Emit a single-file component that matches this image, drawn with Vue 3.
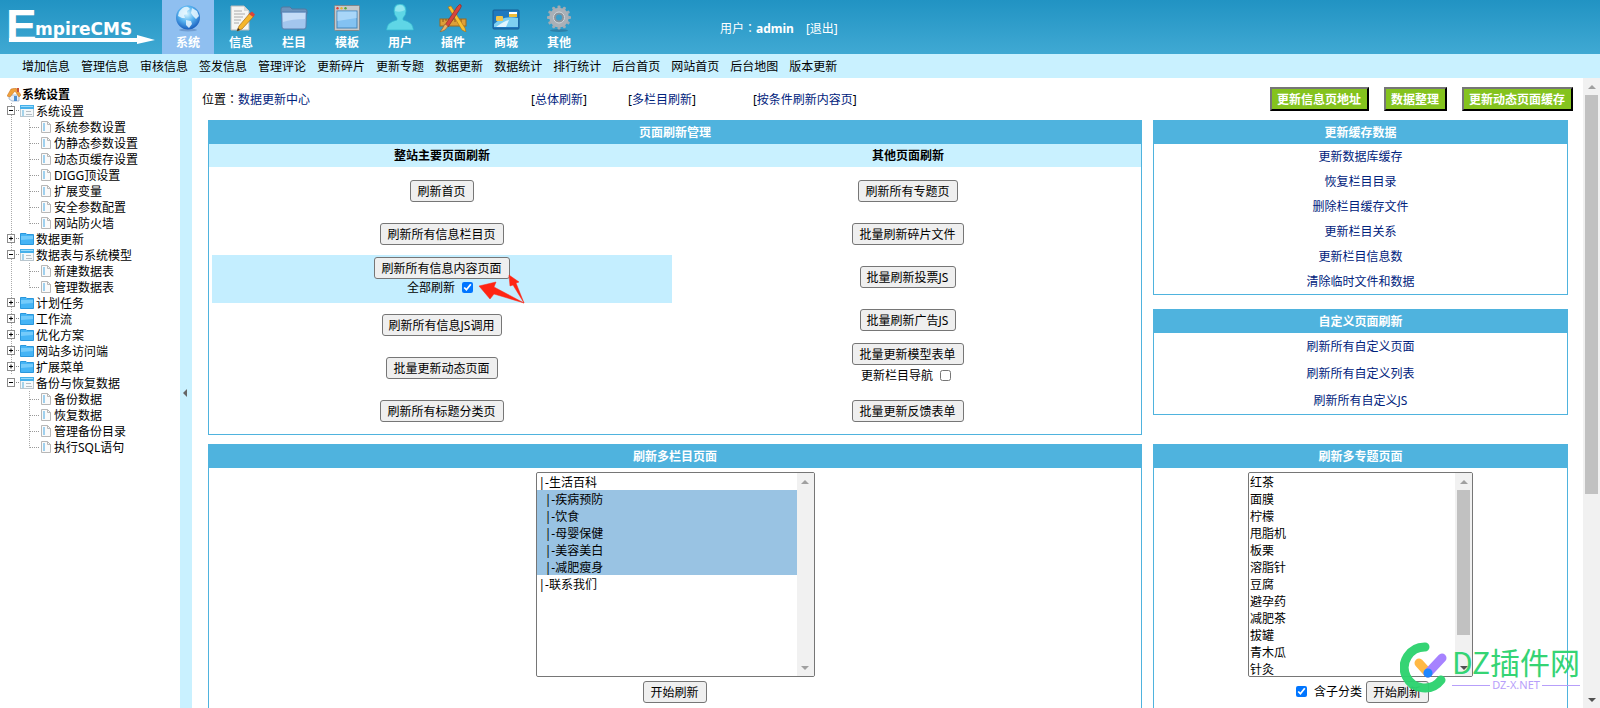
<script setup>
import { ref } from 'vue'

const tabs = ['系统', '信息', '栏目', '模板', '用户', '插件', '商城', '其他']
const icons = ['globe', 'note', 'folder', 'window', 'user', 'tools', 'card', 'gear']

const quickLinks = [
  '增加信息', '管理信息', '审核信息', '签发信息', '管理评论', '更新碎片', '更新专题',
  '数据更新', '数据统计', '排行统计', '后台首页', '网站首页', '后台地图', '版本更新'
]

const tree = [
  { name: '系统设置', children: ['系统参数设置', '伪静态参数设置', '动态页缓存设置', 'DIGG顶设置', '扩展变量', '安全参数配置', '网站防火墙'] },
  { name: '数据更新' },
  { name: '数据表与系统模型', children: ['新建数据表', '管理数据表'] },
  { name: '计划任务' },
  { name: '工作流' },
  { name: '优化方案' },
  { name: '网站多访问端' },
  { name: '扩展菜单' },
  { name: '备份与恢复数据', children: ['备份数据', '恢复数据', '管理备份目录', '执行SQL语句'] }
]

const cacheLinks = ['更新数据库缓存', '恢复栏目目录', '删除栏目缓存文件', '更新栏目关系', '更新栏目信息数', '清除临时文件和数据']
const customLinks = ['刷新所有自定义页面', '刷新所有自定义列表', '刷新所有自定义JS']

const columns = [
  { id: 1, label: '|-生活百科' },
  { id: 2, label: '\u00a0\u00a0|-疾病预防' },
  { id: 3, label: '\u00a0\u00a0|-饮食' },
  { id: 4, label: '\u00a0\u00a0|-母婴保健' },
  { id: 5, label: '\u00a0\u00a0|-美容美白' },
  { id: 6, label: '\u00a0\u00a0|-减肥瘦身' },
  { id: 7, label: '|-联系我们' }
]
const topics = ['红茶', '面膜', '柠檬', '甩脂机', '板栗', '溶脂针', '豆腐', '避孕药', '减肥茶', '拔罐', '青木瓜', '针灸']

const pickedColumns = ref([2, 3, 4, 5, 6])
const pickedTopics = ref([])
const refreshAll = ref(true)
const updateNav = ref(false)
const withChildren = ref(true)
const teeth = [0, 30, 60, 90, 120, 150, 180, 210, 240, 270, 300, 330]
</script>

<template>
  <div class="page">
    <header class="top">
      <svg class="logo" viewBox="0 0 162 54" role="img" aria-label="EmpireCMS">
        <text x="6" y="42" class="logo-initial">E</text>
        <text x="35" y="35" class="logo-rest">mpireCMS</text>
        <path d="M9 38H137V35L155 40L137 44V42H9Z" fill="#fff" />
      </svg>
      <nav class="tabs">
        <a v-for="(t, i) in tabs" :key="t" href="#" class="tab" :class="{ active: i === 0 }">
          <svg viewBox="0 0 28 28" class="tab-icon" aria-hidden="true">
            <g v-if="icons[i] === 'globe'">
              <defs>
                <radialGradient id="gl" cx=".45" cy=".35" r=".65">
                  <stop offset="0" stop-color="#d9f5ff" /><stop offset=".5" stop-color="#58b4f0" /><stop offset="1" stop-color="#1a5fbe" />
                </radialGradient>
              </defs>
              <ellipse cx="14" cy="26" rx="9" ry="1.5" fill="#5a86bd" opacity=".6" />
              <circle cx="14" cy="13.500" r="12" fill="url(#gl)" />
              <path d="M5 8Q9 2 14 3L16 5L13 7L13 10L10 11L11 14L8 14L4 12ZM18 4L23 7L25 12L22 15L19 12L17 9ZM12 16L17 17L18 20L15 24L12 21Z" fill="#eaf8ff" opacity=".85" />
            </g>
            <g v-else-if="icons[i] === 'note'">
              <path d="M4 2H17L22 7V26H4Z" fill="#f5f5f3" stroke="#b9b9b9" />
              <path d="M17 2V7H22Z" fill="#d8d8d6" />
              <path d="M7 7H15M7 10H18M7 13H16M7 16H14M7 19H12" stroke="#aaa" />
              <path d="M23 9L27 12L15 25L10 27L12 22Z" fill="#f6b62c" stroke="#a86b12" stroke-width=".7" />
              <path d="M22 10L25 7.500L28 10.500L26 13Z" fill="#d9443a" />
              <path d="M10 27L11 24L13 26Z" fill="#333" />
            </g>
            <g v-else-if="icons[i] === 'folder'">
              <path d="M1 5Q1 3 3 3H10L12 5H25Q27 5 27 7V10H1Z" fill="#6d94bd" stroke="#53789f" />
              <path d="M1.500 8H26.500L26 23Q26 25 24 25H4Q2 25 2 23Z" fill="#a3c6ee" stroke="#567fae" />
              <path d="M3 9H25V15Q12 15 3 18Z" fill="#c4dcf7" />
            </g>
            <g v-else-if="icons[i] === 'window'">
              <rect x="1.500" y="1.500" width="25" height="25" rx="1" fill="#c6c9cb" stroke="#83888c" />
              <rect x="4" y="7" width="20" height="17" fill="#83c2f2" stroke="#4387bd" />
              <path d="M4.500 7.500H23.500V14L4.500 17Z" fill="#a9d6f8" />
              <circle cx="4.500" cy="4.200" r="1.200" fill="#e53d32" /><circle cx="8.500" cy="4.200" r="1.200" fill="#e5b332" /><circle cx="12.500" cy="4.200" r="1.200" fill="#52a83a" />
            </g>
            <g v-else-if="icons[i] === 'user'">
              <path d="M14 0Q20 0 20 7Q20 11 17 14V16Q27 18 27.500 26H.5Q1 18 11 16V14Q8 11 8 7Q8 0 14 0Z" fill="#5fd6e6" stroke="#33b9d0" stroke-width=".7" />
              <path d="M14 1Q18 1 19 6Q14 9 9 7Q9 1 14 1Z" fill="#8fe6ef" />
            </g>
            <g v-else-if="icons[i] === 'tools'">
              <rect x="1" y="15" width="26" height="7" fill="#dd9f39" stroke="#9e681b" />
              <path d="M4 15V18M7 15V17M10 15V18M13 15V17M16 15V18M19 15V17M22 15V18" stroke="#87581a" />
              <path d="M9 3L12 2L26 24L27 28L23 26Z" fill="#f8c131" stroke="#a66d17" stroke-width=".6" />
              <path d="M18 3Q21-1 22 1Q23 2 21 5L9 23L6 21Z" fill="#d6453d" stroke="#87231f" stroke-width=".6" />
              <path d="M6 20L9 22Q7 27 1 28Q4 24 6 20Z" fill="#e8b36a" stroke="#8b5a26" stroke-width=".6" />
            </g>
            <g v-else-if="icons[i] === 'card'">
              <rect x="1" y="6" width="26" height="19" rx="1" fill="#1f79bf" stroke="#165c95" />
              <path d="M2 20Q11 11 26 14V23H2Z" fill="#7ed0f2" /><path d="M4 23Q12 17 17 16L14 23Z" fill="#e2f6ff" />
              <rect x="4" y="12" width="7" height="5" rx="1" fill="#f1c54c" />
              <path d="M17 8H25V10H17Z" fill="#fff" /><path d="M17 10H25V13H17Z" fill="#f0bd39" />
            </g>
            <g v-else>
              <ellipse cx="14" cy="26.500" rx="9" ry="1.500" fill="#2b6d91" opacity=".6" />
              <rect v-for="a in teeth" :key="a" x="12.500" y="1.500" width="3" height="6" rx="1" fill="#a3abb2" :transform="`rotate(${a} 14 13.500)`" />
              <circle cx="14" cy="13.500" r="7.500" fill="none" stroke="#a9b0b7" stroke-width="4.500" />
              <circle cx="14" cy="13.500" r="5.500" fill="#8b949c" stroke="#d3d7db" />
              <circle cx="14" cy="13.500" r="3" fill="#3b9fcb" />
            </g>
          </svg>
          <span>{{ t }}</span>
        </a>
      </nav>
      <p class="who">用户<span class="colon">：</span><b>admin</b><a href="#" class="exit">[退出]</a></p>
    </header>

    <nav class="quick">
      <a v-for="q in quickLinks" :key="q" href="#">{{ q }}</a>
    </nav>

    <div class="body">
      <aside class="side">
        <div class="side-title">
          <svg viewBox="0 0 14 14" class="home" aria-hidden="true">
            <path d="M2 7H12V13H5L2 11Z" fill="#e9eef5" stroke="#8da7c4" stroke-width=".7" />
            <path d="M0 8L4 1L9 0L14 7L12 9L8 3L3 9Z" fill="#f0a13a" stroke="#c46e20" stroke-width=".5" />
            <rect x="10" y="0" width="2" height="4" fill="#c8523c" /><rect x="7" y="8" width="3" height="5" fill="#4f8fd0" />
          </svg>
          <b>系统设置</b>
        </div>
        <ul class="tree">
          <li v-for="n in tree" :key="n.name" class="branch">
            <div class="row">
              <svg viewBox="0 0 13 16" class="toggle" aria-hidden="true">
                <rect x=".5" y="3.500" width="7" height="8" fill="#fff" stroke="#8c8c8c" />
                <path d="M2 7.500H6" stroke="#000" /><path v-if="!n.children" d="M4 5.500V9.500" stroke="#000" />
                <path d="M9 7.500H13" stroke="#888" stroke-dasharray="1 1" />
              </svg>
              <svg v-if="n.children" viewBox="0 0 14 14" class="icon" aria-hidden="true">
                <rect x=".5" y="1.500" width="13" height="11" fill="#f4f8fa" stroke="#b9c6ce" />
                <rect x="0" y="1" width="14" height="4" fill="#45b0ea" /><path d="M1 2.500H13" stroke="#9adbfb" />
                <path d="M3 6V12" stroke="#a5d3ea" stroke-width="2" /><path d="M6 7.500H11M6 10.500H12" stroke="#b5bec4" />
              </svg>
              <svg v-else viewBox="0 0 14 14" class="icon" aria-hidden="true">
                <path d="M.5 1.500H6L7 2.500H13.500V12.500H.5Z" fill="#45b4f5" stroke="#2a97dc" /><path d="M1 4H13V7L1 8Z" fill="#74cbfb" />
              </svg>
              <a href="#">{{ n.name }}</a>
            </div>
            <ul v-if="n.children" class="leaves">
              <li v-for="c in n.children" :key="c" class="leaf">
                <svg viewBox="0 0 12 14" class="file" aria-hidden="true">
                  <path d="M1.500 1.500H7.500L10.500 4.500V12.500H1.500Z" fill="#fafafa" stroke="#b7b7b7" />
                  <path d="M7.500 1.500V4.500H10.500" fill="none" stroke="#b7b7b7" /><path d="M4 3V11" stroke="#9fd0ee" stroke-width="2" />
                </svg>
                <a href="#">{{ c }}</a>
              </li>
            </ul>
          </li>
        </ul>
      </aside>

      <button class="divider" type="button" aria-label="收起">
        <svg viewBox="0 0 4 8" class="chevron" aria-hidden="true"><path d="M4 0V8L0 4Z" fill="#666" /></svg>
      </button>

      <main class="main">
        <div class="crumbs">
          <div class="where">位置<span class="colon">：</span><a href="#">数据更新中心</a></div>
          <div class="jump">
            <span>[<a href="#">总体刷新</a>]</span>
            <span>[<a href="#">多栏目刷新</a>]</span>
            <span class="far">[<a href="#">按条件刷新内容页</a>]</span>
          </div>
          <div class="actions">
            <button type="button">更新信息页地址</button>
            <button type="button">数据整理</button>
            <button type="button">更新动态页面缓存</button>
          </div>
        </div>

        <div class="grid">
          <section class="panel">
            <h2>页面刷新管理</h2>
            <div class="halves heads"><h3>整站主要页面刷新</h3><h3>其他页面刷新</h3></div>
            <div class="halves">
              <div class="stack">
                <div class="cell"><button class="btn" type="button">刷新首页</button></div>
                <div class="cell"><button class="btn" type="button">刷新所有信息栏目页</button></div>
                <div class="cell tall hot">
                  <button class="btn" type="button">刷新所有信息内容页面</button>
                  <label class="check">全部刷新<input v-model="refreshAll" type="checkbox"></label>
                  <svg class="pointer" viewBox="0 0 48 30" aria-hidden="true">
                    <path d="M1 12L18 8L16 13L46 29L16 20L12 25ZM31 1L41 8L38 9L46 29L35 11L32 12Z" fill="#ff2513" stroke="#ff2513" stroke-width=".5" />
                  </svg>
                </div>
                <div class="cell"><button class="btn" type="button">刷新所有信息JS调用</button></div>
                <div class="cell"><button class="btn" type="button">批量更新动态页面</button></div>
                <div class="cell"><button class="btn" type="button">刷新所有标题分类页</button></div>
              </div>
              <div class="stack">
                <div class="cell"><button class="btn" type="button">刷新所有专题页</button></div>
                <div class="cell"><button class="btn" type="button">批量刷新碎片文件</button></div>
                <div class="cell"><button class="btn" type="button">批量刷新投票JS</button></div>
                <div class="cell"><button class="btn" type="button">批量刷新广告JS</button></div>
                <div class="cell tall">
                  <button class="btn" type="button">批量更新模型表单</button>
                  <label class="check loose">更新栏目导航<input v-model="updateNav" type="checkbox"></label>
                </div>
                <div class="cell"><button class="btn" type="button">批量更新反馈表单</button></div>
              </div>
            </div>
          </section>

          <div class="aside-panels">
            <section class="panel">
              <h2>更新缓存数据</h2>
              <a v-for="l in cacheLinks" :key="l" href="#" class="line">{{ l }}</a>
            </section>
            <section class="panel roomy">
              <h2>自定义页面刷新</h2>
              <a v-for="l in customLinks" :key="l" href="#" class="line">{{ l }}</a>
            </section>
          </div>

          <section class="panel">
            <h2>刷新多栏目页面</h2>
            <div class="picker">
              <div class="listbox wide">
                <select v-model="pickedColumns" multiple size="12" aria-label="刷新多栏目页面">
                  <option v-for="c in columns" :key="c.id" :value="c.id">{{ c.label }}</option>
                </select>
                <div class="bar"><i class="up"></i><i class="down"></i></div>
              </div>
              <div class="submit"><button class="btn" type="button">开始刷新</button></div>
            </div>
          </section>

          <section class="panel">
            <h2>刷新多专题页面</h2>
            <div class="picker">
              <div class="listbox">
                <select v-model="pickedTopics" multiple size="12" aria-label="刷新多专题页面">
                  <option v-for="t in topics" :key="t" :value="t">{{ t }}</option>
                </select>
                <div class="bar"><i class="up"></i><span class="track"><b class="thumb part"></b></span><i class="down dark"></i></div>
              </div>
              <div class="submit">
                <label class="check before"><input v-model="withChildren" type="checkbox">含子分类</label>
                <button class="btn" type="button">开始刷新</button>
              </div>
            </div>
          </section>
        </div>
      </main>
      <div class="bar page-bar"><i class="up"></i><span class="track"><b class="thumb"></b></span><i class="down dark"></i></div>
    </div>

    <div class="mark">
      <svg viewBox="0 0 48 52" class="mark-logo" aria-hidden="true">
        <path d="M25 5A20.500 20.500 0 1 0 41 38" fill="none" stroke="#2dd36f" stroke-width="9" stroke-linecap="round" />
        <path d="M19 21L28 31" stroke="#ffb73d" stroke-width="9" stroke-linecap="round" />
        <path d="M28 31L42 16" stroke="#a37dff" stroke-width="9" stroke-linecap="round" />
        <circle cx="28" cy="31" r="4.500" fill="#1683ff" />
      </svg>
      <div class="mark-text">
        <span class="mark-name">DZ插件网</span>
        <span class="mark-url">DZ-X.NET</span>
      </div>
    </div>
  </div>
</template>

<style>
body { margin: 0; background: #fff; }
</style>

<style scoped>
* { box-sizing: border-box; }
.page {
  position: relative;
  display: flex;
  flex-direction: column;
  height: 100vh;
  overflow: hidden;
  font: 12px/16px "Noto Sans", "Noto Sans CJK SC", sans-serif;
  color: #000;
}
a { color: inherit; text-decoration: none; }
ul { list-style: none; margin: 0; padding: 0; }
h2, h3, p { margin: 0; font-size: 12px; }
button, select, input { font-family: inherit; font-size: 12px; }
.colon { font-family: "Noto Sans CJK TC", sans-serif; }

.top { display: flex; flex: none; height: 54px; background: linear-gradient(#2193c3, #40a9d3); color: #fff; }
.logo { width: 162px; height: 54px; fill: #fff; }
.logo-initial { font: bold 46px "Liberation Sans", sans-serif; }
.logo-rest { font: bold 17px "DejaVu Sans", sans-serif; }
.tabs { display: flex; gap: 1px; }
.tab { display: flex; flex-direction: column; align-items: center; width: 52px; padding-top: 4px; font-weight: bold; }
.tab.active { background: #8fbff0; }
.tab-icon { width: 28px; height: 28px; margin-bottom: 3px; }
.who { margin-left: 135px; line-height: 55px; }
.exit { margin-left: 12px; }

.quick { display: flex; flex: none; gap: 11px; height: 24px; padding-left: 22px; line-height: 26px; background: #c9f1ff; white-space: nowrap; }

.body { display: flex; flex: 1; min-height: 0; }
.side { flex: none; width: 180px; padding: 8px 0 0 7px; }
.side-title { display: flex; align-items: center; height: 17px; }
.home { width: 14px; height: 14px; margin-right: 1px; }
.row, .leaf { display: flex; align-items: center; height: 16px; }
.row a, .leaf a { padding-top: 2px; }
.toggle { width: 13px; height: 16px; }
.icon { width: 14px; height: 14px; margin-right: 2px; }
.branch { background: linear-gradient(#aaa 50%, transparent 50%) 4px 0 / 1px 2px repeat-y; }
.branch:last-child { background: none; }
.leaves { padding-left: 22px; }
.leaf { background: linear-gradient(#aaa 50%, transparent 50%) 0 0 / 1px 2px repeat-y; }
.leaf:last-child { background: none; }
.leaf::before { content: ""; box-sizing: border-box; width: 10px; height: 9px; margin-bottom: 7px; border-bottom: 1px dotted #999; }
.leaf:last-child::before { border-left: 1px dotted #aaa; }
.file { width: 12px; height: 14px; margin: 0 2px 0 1px; }

.divider { display: flex; flex: none; align-items: center; width: 12px; padding: 0 0 0 3px; border: 0; background: #c9f1ff; }
.chevron { width: 4px; height: 8px; }

.main { flex: 1; min-width: 0; overflow: auto; scrollbar-width: none; padding: 9px 0 0 16px; }
.crumbs { display: flex; align-items: center; height: 24px; margin: 0 10px 0 -6px; }
.crumbs a, .line { color: #00227c; }
.where { flex: 0 0 24%; padding-top: 1px; }
.jump { display: flex; flex: 1; gap: 41px; padding-top: 2px; }
.far { margin-left: 16px; }
.actions { display: flex; gap: 15px; }
.actions button { height: 24px; padding: 1px 6px 0 5px; border: 2px outset #555; border-color: #767676 #222 #222 #767676; background: #84c31e; color: #fff; font-weight: bold; line-height: 18px; }

.grid { display: grid; grid-template-columns: 934fr 415fr; gap: 9px 11px; padding: 9px 15px 20px 0; }
.panel { border: 1px solid #4fb3de; background: #fff; }
.panel h2 { height: 23px; line-height: 23px; background: #4fb3de; color: #fff; text-align: center; }
.halves { display: grid; grid-template-columns: 1fr 1fr; }
.heads { height: 23px; line-height: 23px; background: #c9f1ff; text-align: center; }
.stack { padding: 2px 3px; }
.cell { display: flex; flex-direction: column; align-items: center; justify-content: center; height: 43px; }
.tall { height: 48px; padding-top: 2px; justify-content: flex-start; }
.hot { position: relative; background: #c4eeff; }
.pointer { position: absolute; top: 19px; left: calc(50% + 36px); width: 48px; height: 30px; }
.btn { flex: none; height: 22px; padding: 1px 7px 0 6px; border: 1px solid #767676; border-radius: 3px; background: #efefef; color: #000; line-height: 20px; }
.check { display: flex; align-items: center; gap: 7px; padding-right: 4px; line-height: 18px; }
.check.loose { line-height: 22px; }
.check.before { padding: 0 0 0 4px; }
.check input { width: 11px; height: 11px; margin: 0 0 2px; }

.aside-panels { display: flex; flex-direction: column; gap: 14px; }
.line { display: block; line-height: 25px; text-align: center; }
.roomy .line { line-height: 27px; }

.picker { display: flex; flex-direction: column; align-items: center; gap: 4px; min-height: 260px; padding-top: 4px; }
.listbox { display: flex; width: 225px; height: 205px; border: 1px solid #767676; border-radius: 2px; overflow: hidden; }
.listbox.wide { width: 279px; }
.listbox select { flex: 1; min-width: 0; height: 203px; padding: 0; border: 0; outline: 0; background: #fff; color: #000; scrollbar-width: none; overflow: hidden; }
.listbox option { height: 17px; min-height: 17px; padding: 0 1px; line-height: 15px; color: #000; }
.wide option { padding-left: 2px; }
.listbox option:checked { background: #99c3e3 linear-gradient(#99c3e3, #99c3e3); color: #000; }
.submit { display: flex; align-items: center; gap: 4px; }

.bar { display: flex; flex: none; flex-direction: column; justify-content: space-between; align-items: center; width: 17px; background: #f1f1f1; }
.up, .down { flex: none; display: flex; align-items: center; justify-content: center; width: 17px; height: 17px; }
.up::before, .down::before { content: ""; border: 4px solid transparent; }
.up::before { border-top: 0; border-bottom-color: #a0a0a0; }
.down::before { border-bottom: 0; border-top-color: #a0a0a0; }
.down.dark::before { border-top-color: #505050; }
.track { flex: 1; width: 13px; }
.thumb { display: block; width: 13px; height: 67%; background: #c1c1c1; }
.thumb.part { height: 86%; }

.mark { position: absolute; right: 20px; bottom: 14px; display: flex; gap: 4px; opacity: .96; pointer-events: none; }
.mark-logo { width: 48px; height: 52px; }
.mark-text { display: flex; flex-direction: column; width: 128px; }
.mark-name { color: #2dd36f; font: 400 30px/38px "Noto Sans CJK SC", sans-serif; white-space: nowrap; }
.mark-url { display: flex; align-items: center; gap: 2px; color: #b59cfa; font: 11px/10px "Noto Sans", sans-serif; white-space: nowrap; }
.mark-url::before, .mark-url::after { content: ""; flex: 1; height: 1px; background: #b59cfa; }
</style>
